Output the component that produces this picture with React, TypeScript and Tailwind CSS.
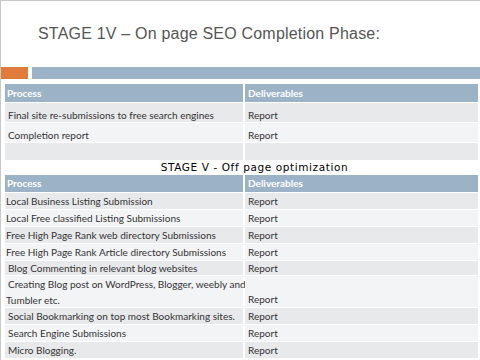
import React from "react";

type Row = { p: React.ReactNode; d: string; h: string; dark: boolean; indent?: boolean; bottom?: boolean; low?: boolean };

const body = { fontFamily: "Lato, 'Liberation Sans', sans-serif" };

function Header({ h }: { h: string }) {
  return (
    <div className={`flex gap-[2px] ${h}`}>
      <div className="w-[238px] bg-[#9cb2c7] flex items-center pl-[2px] text-[10px] font-bold text-white" style={body}>
        Process
      </div>
      <div className="flex-1 bg-[#9cb2c7] flex items-center pl-[3px] text-[10px] font-bold text-white" style={body}>
        Deliverables
      </div>
    </div>
  );
}

function Rows({ rows }: { rows: Row[] }) {
  return (
    <>
      {rows.map((r, i) => {
        const bg = r.dark ? "bg-[#e8e9eb]" : "bg-[#f3f4f6]";
        return (
          <div key={i} className={`flex gap-[2px] border-t border-white ${r.h}`}>
            <div
              className={`w-[238px] ${bg} flex items-center ${r.indent ? "pl-[3px]" : "pl-[1px]"} ${r.low ? "pt-[4px]" : ""} text-[10px] leading-[14px] whitespace-nowrap text-[#333]`}
              style={body}
            >
              <div>{r.p}</div>
            </div>
            <div
              className={`flex-1 ${bg} flex ${r.bottom ? "items-end pb-[1px]" : "items-center"} ${r.low ? "pt-[4px]" : ""} pl-[3px] text-[10px] leading-[14px] text-[#333]`}
              style={body}
            >
              {r.d}
            </div>
          </div>
        );
      })}
    </>
  );
}

export default function App() {
  const t1: Row[] = [
    { p: "Final site re-submissions to free search engines", d: "Report", h: "h-[20px]", dark: true, indent: true, low: true },
    { p: "Completion report", d: "Report", h: "h-[20px]", dark: false, indent: true, low: true },
    { p: "", d: "", h: "h-[18px]", dark: true },
  ];
  const t2: Row[] = [
    { p: "Local Business  Listing Submission", d: "Report", h: "h-[17px]", dark: true },
    { p: "Local Free  classified Listing Submissions", d: "Report", h: "h-[17px]", dark: false },
    { p: "Free High Page Rank web directory Submissions", d: "Report", h: "h-[17px]", dark: true },
    { p: "Free High Page Rank Article directory Submissions", d: "Report", h: "h-[17px]", dark: false },
    { p: <span className="pl-[2px]">Blog Commenting in relevant blog websites</span>, d: "Report", h: "h-[15px]", dark: true },
    {
      p: (
        <div className="pt-[1px]">
          <div className="pl-[2px] leading-[16px]">Creating Blog post on WordPress, Blogger, weebly and</div>
          <div className="leading-[16px]">Tumbler etc.</div>
        </div>
      ),
      d: "Report",
      h: "h-[32px]",
      dark: false,
      bottom: true,
    },
    { p: <span className="pl-[2px]">Social Bookmarking on top most Bookmarking sites.</span>, d: "Report", h: "h-[17px]", dark: true },
    { p: <span className="pl-[2px]">Search Engine Submissions</span>, d: "Report", h: "h-[17px]", dark: false },
    { p: <span className="pl-[2px]">Micro Blogging.</span>, d: "Report", h: "h-[17px]", dark: true },
  ];

  return (
    <div className="w-[480px] h-[360px] bg-white overflow-hidden border-t border-l border-[#c8c8c8] flex flex-col">
      <div className="h-[66px] pt-[21px] pl-[37px]">
        <div
          className="text-[16px] text-[#555] tracking-[0.2px]"
          style={{ fontFamily: "'Liberation Sans', sans-serif" }}
        >
          STAGE 1V – On page SEO Completion Phase:
        </div>
      </div>
      <div className="flex gap-[4px] h-[12px]">
        <div className="w-[27px] bg-[#e07b3c]" />
        <div className="flex-1 bg-[#9cb2c7]" />
      </div>
      <div className="mt-[5px] ml-[4px] mr-[2px] flex flex-col">
        <Header h="h-[18px]" />
        <Rows rows={t1} />
      </div>
      <div className="h-[15px] flex items-center justify-center pl-[28px]">
        <span
          className="text-[10.5px] font-medium text-black tracking-[0.6px]"
          style={{ fontFamily: "'DejaVu Sans', sans-serif" }}
        >
          STAGE V - Off page optimization
        </span>
      </div>
      <div className="ml-[4px] mr-[2px] flex flex-col">
        <Header h="h-[17px]" />
        <Rows rows={t2} />
      </div>
    </div>
  );
}
